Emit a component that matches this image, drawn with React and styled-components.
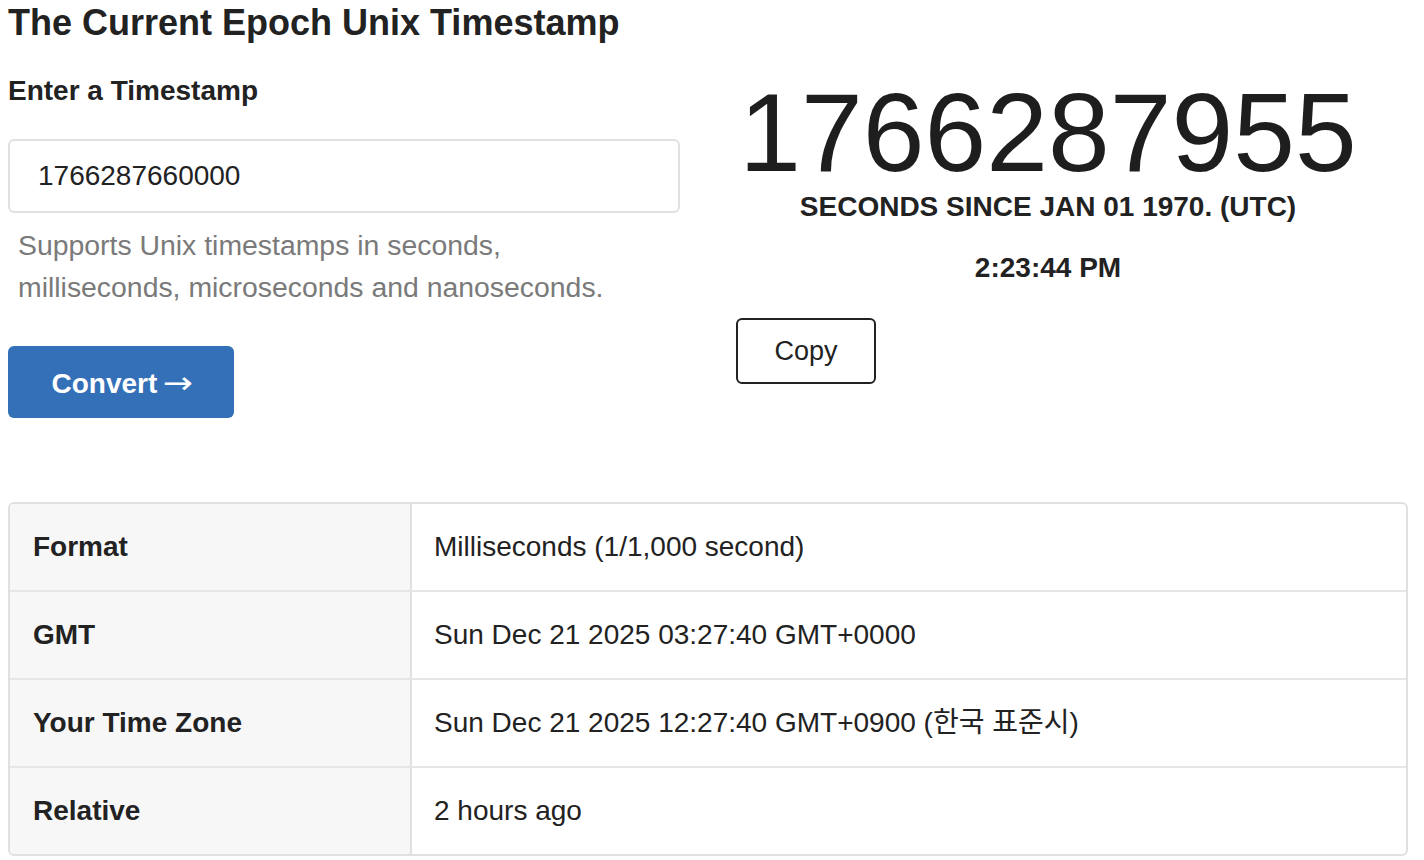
import React from "react";
import styled, { createGlobalStyle } from "styled-components";

const Global = createGlobalStyle`
  html, body { margin: 0; padding: 0; background: #fff; }
  body { font-family: "Liberation Sans", Arial, "Noto Sans CJK KR", sans-serif; color: #222; }
  * { box-sizing: border-box; }
`;

const Page = styled.div`
  padding: 0 16px 0 8px;
`;

const Title = styled.h1`
  margin: 0;
  padding-top: 3px;
  font-size: 36px;
  line-height: 40px;
  font-weight: 700;
  color: #222;
`;

const Top = styled.div`
  display: grid;
  grid-template-columns: 672px 624px;
  column-gap: 56px;
  margin-top: 32px;
`;

const Left = styled.div`
  display: flex;
  flex-direction: column;
  align-items: flex-start;
`;

const Label = styled.label`
  font-size: 28px;
  font-weight: 700;
  line-height: 32px;
`;

const Input = styled.input`
  margin-top: 32px;
  width: 672px;
  height: 74px;
  border: 2px solid #e0e0e0;
  border-radius: 6px;
  padding: 0 28px;
  font-family: inherit;
  font-size: 28px;
  color: #222;
  outline: none;
`;

const Help = styled.p`
  margin: 11px 0 0 10px;
  font-size: 28.4px;
  line-height: 42px;
  color: #7a7a7a;
`;

const PrimaryButton = styled.button`
  margin-top: 38px;
  width: 226px;
  height: 72px;
  border: none;
  border-radius: 6px;
  background: #3470b8;
  color: #fff;
  font-family: inherit;
  font-size: 28px;
  font-weight: 700;
`;

const Arrow = styled.span`
  display: inline-block;
  font-family: "DejaVu Sans", sans-serif;
  font-weight: 400;
  font-size: 30px;
  margin-left: 8px;
  transform: scaleX(1.2);
`;

const Right = styled.div`
  display: flex;
  flex-direction: column;
  align-items: center;
`;

const BigNumber = styled.div`
  font-size: 111px;
  line-height: 112px;
  margin-top: 2px;
  color: #1e1e1e;
`;

const Caption = styled.div`
  font-size: 28px;
  font-weight: 700;
  line-height: 32px;
  margin-top: 2px;
`;

const Clock = styled.div`
  font-size: 28px;
  font-weight: 700;
  line-height: 32px;
  margin-top: 29px;
`;

const OutlineButton = styled.button`
  align-self: flex-start;
  margin-top: 34px;
  width: 140px;
  height: 66px;
  background: #fff;
  border: 2px solid #222;
  border-radius: 6px;
  font-family: inherit;
  font-size: 27px;
  color: #222;
`;

const Table = styled.div`
  margin-top: 84px;
  width: 1400px;
  border: 2px solid #e0e0e0;
  border-radius: 6px;
  overflow: hidden;
`;

const Row = styled.div`
  display: grid;
  grid-template-columns: 402px 1fr;
  height: 86px;
  & + & {
    height: 88px;
    border-top: 2px solid #e6e6e6;
  }
`;

const Head = styled.div`
  display: flex;
  align-items: center;
  padding-left: 23px;
  background: #f7f7f7;
  border-right: 2px solid #e0e0e0;
  font-size: 28px;
  line-height: 32px;
  font-weight: 700;
`;

const Cell = styled.div`
  display: flex;
  align-items: center;
  padding-left: 22px;
  font-size: 28px;
  line-height: 32px;
`;

const rows = [
  ["Format", "Milliseconds (1/1,000 second)"],
  ["GMT", "Sun Dec 21 2025 03:27:40 GMT+0000"],
  ["Your Time Zone", "Sun Dec 21 2025 12:27:40 GMT+0900 (한국 표준시)"],
  ["Relative", "2 hours ago"],
];

export default function App() {
  return (
    <Page>
      <Global />
      <Title>The Current Epoch Unix Timestamp</Title>
      <Top>
        <Left>
          <Label>Enter a Timestamp</Label>
          <Input defaultValue="1766287660000" />
          <Help>
            Supports Unix timestamps in seconds,
            <br />
            milliseconds, microseconds and nanoseconds.
          </Help>
          <PrimaryButton>
            Convert<Arrow>→</Arrow>
          </PrimaryButton>
        </Left>
        <Right>
          <BigNumber>1766287955</BigNumber>
          <Caption>SECONDS SINCE JAN 01 1970. (UTC)</Caption>
          <Clock>2:23:44 PM</Clock>
          <OutlineButton>Copy</OutlineButton>
        </Right>
      </Top>
      <Table>
        {rows.map(([k, v]) => (
          <Row key={k}>
            <Head>{k}</Head>
            <Cell>{v}</Cell>
          </Row>
        ))}
      </Table>
    </Page>
  );
}
